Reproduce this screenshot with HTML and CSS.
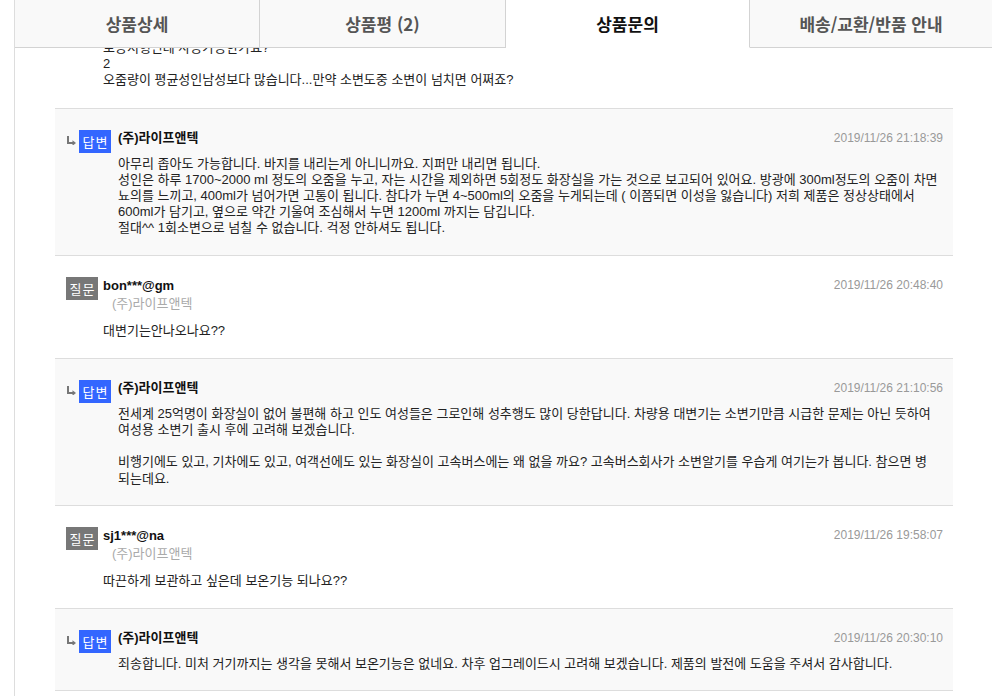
FILE: index.html
```html
<!DOCTYPE html>
<html lang="ko">
<head>
<meta charset="utf-8">
<title>상품문의</title>
<link rel="stylesheet" href="styles.css">
</head>
<body>
<div class="page">
  <nav class="tabs">
    <div class="tab">상품상세</div>
    <div class="tab">상품평 (2)</div>
    <div class="tab active">상품문의</div>
    <div class="tab">배송/교환/반품 안내</div>
  </nav>

  <div class="qna">
    <div class="row question scrolled">
      <div class="head">
        <span class="badge q">질문</span>
        <div class="who">
          <div class="name">pow***@na</div>
          <div class="company">(주)라이프앤텍</div>
        </div>
        <span class="date">2019/11/27 09:12:44</span>
      </div>
      <div class="body q-body">보증처형인데 사용가능한가요?<br>2<br>오줌량이 평균성인남성보다 많습니다...만약 소변도중 소변이 넘치면 어쩌죠?</div>
    </div>

    <div class="row answer">
      <div class="head">
        <svg class="arrow" width="9" height="9" viewBox="0 0 9 9"><path d="M1 0V7H6" fill="none" stroke="#777" stroke-width="2"/><path d="M5.5 4.2L9 7L5.5 9.8Z" fill="#777"/></svg>
        <span class="badge a">답변</span>
        <span class="name a-name">(주)라이프앤텍</span>
        <span class="date">2019/11/26 21:18:39</span>
      </div>
      <div class="body a-body">아무리 좁아도 가능합니다. 바지를 내리는게 아니니까요. 지퍼만 내리면 됩니다.<br>성인은 하루 1700~2000 ml 정도의 오줌을 누고, 자는 시간을 제외하면 5회정도 화장실을 가는 것으로 보고되어 있어요. 방광에 300ml정도의 오줌이 차면<br>뇨의를 느끼고, 400ml가 넘어가면 고통이 됩니다. 참다가 누면 4~500ml의 오줌을 누게되는데 ( 이쯤되면 이성을 잃습니다) 저희 제품은 정상상태에서<br>600ml가 담기고, 옆으로 약간 기울여 조심해서 누면 1200ml 까지는 담깁니다.<br>절대^^ 1회소변으로 넘칠 수 없습니다. 걱정 안하셔도 됩니다.</div>
    </div>

    <div class="row question">
      <div class="head">
        <span class="badge q">질문</span>
        <div class="who">
          <div class="name">bon***@gm</div>
          <div class="company">(주)라이프앤텍</div>
        </div>
        <span class="date">2019/11/26 20:48:40</span>
      </div>
      <div class="body q-body">대변기는안나오나요??</div>
    </div>

    <div class="row answer">
      <div class="head">
        <svg class="arrow" width="9" height="9" viewBox="0 0 9 9"><path d="M1 0V7H6" fill="none" stroke="#777" stroke-width="2"/><path d="M5.5 4.2L9 7L5.5 9.8Z" fill="#777"/></svg>
        <span class="badge a">답변</span>
        <span class="name a-name">(주)라이프앤텍</span>
        <span class="date">2019/11/26 21:10:56</span>
      </div>
      <div class="body a-body">전세계 25억명이 화장실이 없어 불편해 하고 인도 여성들은 그로인해 성추행도 많이 당한답니다. 차량용 대변기는 소변기만큼 시급한 문제는 아닌 듯하여<br>여성용 소변기 출시 후에 고려해 보겠습니다.<br><br>비행기에도 있고, 기차에도 있고, 여객선에도 있는 화장실이 고속버스에는 왜 없을 까요? 고속버스회사가 소변알기를 우습게 여기는가 봅니다. 참으면 병<br>되는데요.</div>
    </div>

    <div class="row question">
      <div class="head">
        <span class="badge q">질문</span>
        <div class="who">
          <div class="name">sj1***@na</div>
          <div class="company">(주)라이프앤텍</div>
        </div>
        <span class="date">2019/11/26 19:58:07</span>
      </div>
      <div class="body q-body">따끈하게 보관하고 싶은데 보온기능 되나요??</div>
    </div>

    <div class="row answer">
      <div class="head">
        <svg class="arrow" width="9" height="9" viewBox="0 0 9 9"><path d="M1 0V7H6" fill="none" stroke="#777" stroke-width="2"/><path d="M5.5 4.2L9 7L5.5 9.8Z" fill="#777"/></svg>
        <span class="badge a">답변</span>
        <span class="name a-name">(주)라이프앤텍</span>
        <span class="date">2019/11/26 20:30:10</span>
      </div>
      <div class="body a-body">죄송합니다. 미처 거기까지는 생각을 못해서 보온기능은 없네요. 차후 업그레이드시 고려해 보겠습니다. 제품의 발전에 도움을 주셔서 감사합니다.</div>
    </div>
  </div>
</div>
</body>
</html>
```
FILE: styles.css
```css
html, body {
  margin: 0;
  padding: 0;
  background: #fff;
  overflow: hidden;
}
body {
  font-family: "Liberation Sans", "Noto Sans CJK KR", sans-serif;
  font-size: 13px;
  color: #222;
}
.page {
  position: relative;
  margin-left: 14px;
  border-left: 1px solid #ddd;
  height: 696px;
  overflow: hidden;
  padding-left: 40px;
}
.tabs {
  position: absolute;
  top: 0;
  left: 0;
  right: 0;
  z-index: 5;
  display: grid;
  grid-template-columns: 245px 246px 244px 1fr;
  height: 48px;
}
.tab {
  background: #f9f9f9;
  border-right: 1px solid #d3d3d3;
  border-bottom: 1px solid #d3d3d3;
  display: flex;
  align-items: center;
  justify-content: center;
  font-family: "Noto Sans CJK KR", sans-serif;
  font-weight: 700;
  font-size: 17px;
  color: #555;
  padding-bottom: 1px;
}
.tab:first-child {
  margin-left: -1px;
  border-left: 1px solid #d3d3d3;
}
.tab:last-child {
  border-right: none;
}
.tab.active {
  background: #fff;
  color: #111;
  border-bottom-color: transparent;
}
.qna {
  width: 898px;
  margin-top: -27px;
}
.row {
  border-bottom: 1px solid #ddd;
}
.row.question {
  padding: 21px 10px 19px 11px;
  background: #fff;
}
.row.answer {
  padding: 21px 10px 18px 12px;
  background: #f9f9f9;
}
.head {
  display: flex;
  align-items: flex-start;
}
.scrolled .head {
  visibility: hidden;
}
.badge {
  width: 32px;
  height: 23px;
  display: flex;
  align-items: center;
  justify-content: center;
  color: #fff;
  font-family: "Noto Sans CJK KR", sans-serif;
  font-size: 13px;
  letter-spacing: 1px;
  padding-left: 1px;
  box-sizing: border-box;
  flex: none;
}
.badge.q { background: #777; }
.badge.a { background: #3366ff; }
.arrow {
  flex: none;
  margin-top: 6px;
  margin-right: 3px;
}
.who {
  margin-left: 5px;
  flex: 1;
}
.name {
  font-weight: 700;
  color: #111;
  line-height: 18px;
  font-size: 13px;
}
.a-name {
  margin-left: 7px;
  margin-top: -1px;
  flex: 1;
}
.company {
  color: #aaa;
  line-height: 18px;
  margin-left: 9px;
}
.date {
  color: #999;
  font-size: 12px;
  line-height: 18px;
  margin-top: -1px;
  flex: none;
}
.body {
  line-height: 16.2px;
  color: #222;
}
.q-body {
  padding-left: 37px;
  margin-top: 10px;
}
.a-body {
  padding-left: 51px;
  margin-top: 3px;
}
```
